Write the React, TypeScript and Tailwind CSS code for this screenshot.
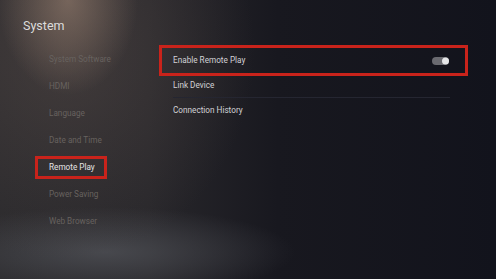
import { useState } from 'react';

const menu = [
  'System Software',
  'HDMI',
  'Language',
  'Date and Time',
  'Remote Play',
  'Power Saving',
  'Web Browser',
];

export default function App() {
  const [on, setOn] = useState(true);
  const selected = 'Remote Play';

  return (
    <div
      className="w-[496px] h-[279px] overflow-hidden flex text-[#d2d2d6] bg-[#13141d] bg-[image:radial-gradient(ellipse_70px_95px_at_68px_0px,rgba(165,138,120,0.55),transparent),radial-gradient(ellipse_190px_210px_at_65px_50px,rgba(90,78,74,0.5),transparent),radial-gradient(ellipse_190px_45px_at_105px_252px,rgba(88,90,96,0.65),transparent),linear-gradient(90deg,#2b2a2d_0%,#28272b_30%,#18181f_56%,#12131c_100%)]"
      style={{ fontFamily: 'Roboto, "Open Sans", sans-serif' }}
    >
      {/* left menu */}
      <div className="w-[159px] shrink-0 flex flex-col">
        <div className="pl-[23px] pt-[20px] h-[45px] text-[12.5px] text-[#dcdcdc] leading-none">
          System
        </div>
        <div className="flex flex-col items-start gap-[4px] pl-[35px] pt-[3px]">
          {menu.map((m) => (
            <div
              key={m}
              className={
                m === selected
                  ? 'flex items-center h-[23px] pl-[11px] pr-[9px] border-[3px] border-[#c9231b] text-[8.2px] leading-none text-[#e4e4e4]'
                  : 'flex items-center h-[23px] pl-[11px] pr-[9px] border-[3px] border-transparent text-[8.2px] leading-none text-[#67625f]'
              }
            >
              {m}
            </div>
          ))}
        </div>
      </div>

      {/* right panel */}
      <div className="flex-1 flex flex-col pt-[45px]">
        <div className="w-[309px] h-[31px] border-[3px] border-[#c9231b] flex items-center justify-between pl-[11px] pr-[16px]">
          <span className="text-[8.2px] leading-none">Enable Remote Play</span>
          <button
            onClick={() => setOn(!on)}
            className="relative w-[17px] h-[8px] rounded-full bg-[#6a6a70]"
          >
            <span
              className={
                on
                  ? 'absolute top-1/2 -translate-y-1/2 right-0 w-[7px] h-[7px] rounded-full bg-[#e6e6e8]'
                  : 'absolute top-1/2 -translate-y-1/2 left-0 w-[7px] h-[7px] rounded-full bg-[#e6e6e8]'
              }
            />
          </button>
        </div>
        <div className="h-[21px] flex items-center pl-[14px] pb-[2px] text-[8.2px] leading-none">
          Link Device
        </div>
        <div className="ml-[14px] w-[277px] h-px bg-[#252631]" />
        <div className="h-[25px] flex items-center pl-[14px] text-[8.2px] leading-none">
          Connection History
        </div>
      </div>
    </div>
  );
}
